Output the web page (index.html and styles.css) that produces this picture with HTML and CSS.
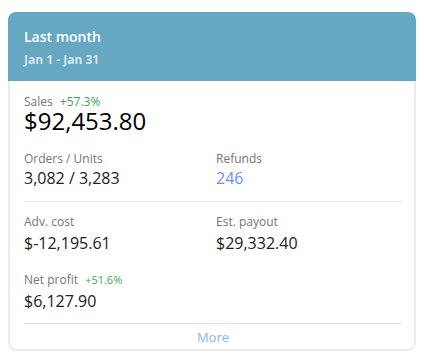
FILE: index.html
```html
<!DOCTYPE html>
<html lang="en">
<head>
  <meta charset="UTF-8" />
  <title>Last month</title>
  <link rel="stylesheet" href="styles.css">
</head>
<body>
  <div class="card">
    <header class="card-head">
      <div class="period">Last month</div>
      <div class="range">Jan 1 - Jan 31</div>
    </header>

    <div class="card-body">
      <div class="block">
        <div class="label">Sales <span class="delta">+57.3%</span></div>
        <div class="big">$92,453.80</div>
      </div>

      <div class="row">
        <div>
          <div class="label">Orders / Units</div>
          <div class="value">3,082 / 3,283</div>
        </div>
        <div>
          <div class="label">Refunds</div>
          <div class="value link">246</div>
        </div>
      </div>

      <div class="row split">
        <div>
          <div class="label">Adv. cost</div>
          <div class="value">$-12,195.61</div>
        </div>
        <div>
          <div class="label">Est. payout</div>
          <div class="value">$29,332.40</div>
        </div>
      </div>

      <div class="block net">
        <div class="label">Net profit <span class="delta small">+51.6%</span></div>
        <div class="value">$6,127.90</div>
      </div>

      <a class="more" href="#">More</a>
    </div>
  </div>
</body>
</html>
```

FILE: styles.css
```css
body {
  font-family: 'Open Sans', sans-serif;
  background: #ffffff;
  color: #222;
  margin: 0;
  padding: 12px 8px;
}

.card {
  width: 408px;
  border-radius: 8px;
  overflow: hidden;
  background: #fff;
}

.card-head {
  background-color: #66a8c1;
  color: white;
  padding: 15px 16px 14px;
  height: 69px;
  box-sizing: border-box;
}

.period {
  font-size: 14px;
  font-weight: 600;
  line-height: 20px;
}

.range {
  font-size: 12px;
  font-weight: 700;
  line-height: 18px;
  margin-top: 4px;
  color: rgba(255, 255, 255, 0.72);
}

.card-body {
  border: 2px solid #ebebeb;
  border-top: none;
  border-radius: 0 0 8px 8px;
  padding: 13px 12px 0 14px;
}

.label {
  font-size: 12px;
  line-height: 16px;
  color: #757575;
}

.delta {
  color: #43a855;
  font-size: 12px;
  margin-left: 4px;
}

.delta.small {
  font-size: 11px;
}

.big {
  font-size: 24px;
  line-height: 22px;
  color: #000;
}

.value {
  font-size: 16px;
  line-height: 22px;
  color: #222;
  margin-top: 2px;
}

.value.link {
  color: #6b8ff0;
}

.row {
  display: grid;
  grid-template-columns: 192px 1fr;
  margin-top: 19px;
  padding-bottom: 12px;
  border-bottom: 1px solid #e4e4e4;
}

.row .value {
  margin-top: 0;
}

.row.split {
  border-bottom: none;
  margin-top: 0;
  padding-top: 12px;
  padding-bottom: 0;
}

.row.split .value {
  margin-top: 2px;
}

.net {
  margin-top: 18px;
  padding-bottom: 11px;
  border-bottom: 1px solid #e4e4e4;
}

.more {
  display: block;
  text-align: center;
  font-size: 13px;
  line-height: 24px;
  padding-top: 1px;
  color: #8fb4f5;
  text-decoration: none;
}
```
